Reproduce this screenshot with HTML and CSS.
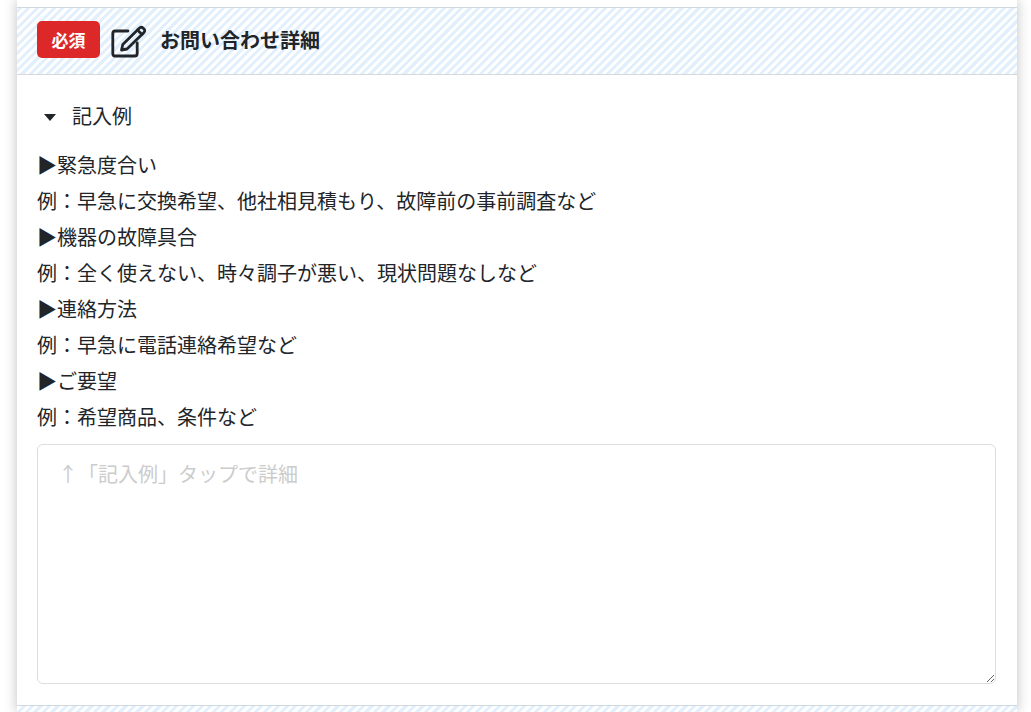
FILE: index.html
```html
<!DOCTYPE html>
<html lang="ja">
<head>
    <meta charset="utf-8">
    <title>お問い合わせ詳細</title>
    <link rel="stylesheet" href="styles.css">
</head>
<body>
    <div class="container">
        <div class="section-header">
            <span class="required">必須</span>
            <svg class="edit-icon" width="36" height="34" viewBox="0 0 36 34" fill="none" stroke="#212529" stroke-width="2.8" stroke-linecap="round" stroke-linejoin="round">
                <path d="M17 7H4Q1.800 7 1.800 9.200V29.800Q1.800 32 4 32H24Q26.200 32 26.200 29.800V19"/>
                <path d="M10.500 26L11.800 20.500L28.500 4Q30.500 2.500 32 4L33 5Q34.500 6.500 33 8.500L16 25Z"/>
                <path d="M26.500 6L31 10.500"/>
            </svg>
            <h2>お問い合わせ詳細</h2>
        </div>
        <div class="section-body">
            <details class="example" open>
                <summary>記入例</summary>
                <p>▶緊急度合い</p>
                <p>例：早急に交換希望、他社相見積もり、故障前の事前調査など</p>
                <p>▶機器の故障具合</p>
                <p>例：全く使えない、時々調子が悪い、現状問題なしなど</p>
                <p>▶連絡方法</p>
                <p>例：早急に電話連絡希望など</p>
                <p>▶ご要望</p>
                <p>例：希望商品、条件など</p>
            </details>
            <textarea class="detail-input" placeholder="↑「記入例」タップで詳細"></textarea>
        </div>
        <div class="section-header next"></div>
    </div>
</body>
</html>
```

FILE: styles.css
```css
* {
    box-sizing: border-box;
}

html, body {
    height: 712px;
    overflow: hidden;
}

body {
    margin: 0;
    background-color: #fff;
    color: #212529;
    font-family: "Roboto", "Noto Sans CJK JP", sans-serif;
    font-size: 20px;
}

.container {
    width: 1000px;
    height: 712px;
    margin-left: 17px;
    padding-top: 7px;
    background-color: #fff;
    box-shadow: 0 0 12px rgba(0, 0, 0, 0.25);
    clip-path: inset(0 -20px 0 -20px);
}

.section-header {
    display: flex;
    align-items: center;
    height: 68px;
    padding-left: 20px;
    border-top: 1px solid #cfd8dc;
    border-bottom: 1px solid #d5d8dc;
    background: repeating-linear-gradient(-45deg, #e1f0fc 0, #e1f0fc 3px, #fff 3px, #fff 6px);
}

.section-header h2 {
    margin: 0;
    font-size: 20px;
    font-weight: 700;
    line-height: 1;
}

.section-header.next {
    height: 20px;
    border-bottom: none;
}

.required {
    display: flex;
    align-items: center;
    justify-content: center;
    width: 63px;
    height: 37px;
    margin-right: 11px;
    margin-bottom: 4px;
    border-radius: 5px;
    background-color: #dc2828;
    color: #fff;
    font-size: 17px;
    font-weight: 700;
}

.edit-icon {
    margin-right: 13px;
}

.section-body {
    height: 630px;
    padding: 24px 20px 0;
}

.example summary {
    display: flex;
    align-items: center;
    height: 36px;
    margin-bottom: 13px;
    padding-left: 7px;
    list-style: none;
    line-height: 36px;
}

.example summary::before {
    content: "";
    width: 0;
    height: 0;
    margin-right: 16px;
    border-top: 7px solid #212529;
    border-left: 6px solid transparent;
    border-right: 6px solid transparent;
}

.example p {
    margin: 0;
    line-height: 36px;
}

.detail-input {
    display: block;
    width: 959px;
    height: 240px;
    margin-top: 8px;
    padding: 15px 20px;
    border: 1px solid #ddd;
    border-radius: 6px;
    outline: none;
    font-family: inherit;
    font-size: 20px;
    line-height: 1.5;
}

.detail-input::placeholder {
    color: #ccc;
}
```
